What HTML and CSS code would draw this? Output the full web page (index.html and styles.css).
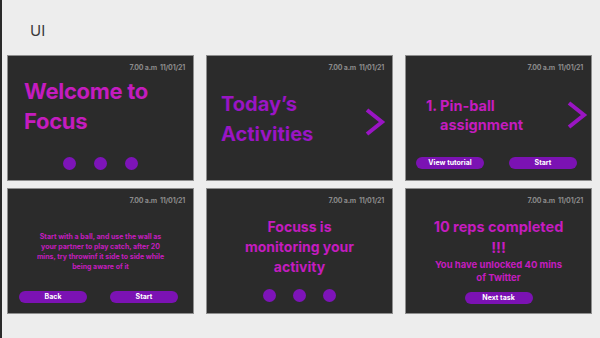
FILE: index.html
```html
<!DOCTYPE html>
<html lang="en">
<head>
    <meta charset="UTF-8">
    <meta name="viewport" content="width=device-width, initial-scale=1.0">
    <title>UI - Focus screens</title>
    <link rel="stylesheet" href="styles.css">
</head>
<body>
    <div class="page">
        <!-- Frame label -->
        <div class="frame-label">UI</div>

        <div class="screens">
            <!-- Welcome -->
            <div class="screen">
                <div class="clock">7.00 a.m&nbsp; 11/01/21</div>
                <div class="welcome-title">Welcome to<br>Focus</div>
                <div class="dots">
                    <span class="dot"></span><span class="dot"></span><span class="dot"></span>
                </div>
            </div>

            <!-- Today's activities -->
            <div class="screen">
                <div class="clock">7.00 a.m&nbsp; 11/01/21</div>
                <div class="row-with-arrow">
                    <div class="activities-title">Today’s<br>Activities</div>
                    <svg class="chevron" width="22" height="30" viewBox="0 0 22 30">
                        <polyline points="3,3 18,15 3,27" fill="none" stroke="#9a15c4" stroke-width="4"/>
                    </svg>
                </div>
            </div>

            <!-- Pin-ball task -->
            <div class="screen">
                <div class="clock">7.00 a.m&nbsp; 11/01/21</div>
                <div class="row-with-arrow task-row">
                    <div class="task-title">1. Pin-ball<br>assignment</div>
                    <svg class="chevron" width="22" height="30" viewBox="0 0 22 30">
                        <polyline points="3,3 18,15 3,27" fill="none" stroke="#9a15c4" stroke-width="4"/>
                    </svg>
                </div>
                <div class="button-row">
                    <button class="pill">View tutorial</button>
                    <button class="pill">Start</button>
                </div>
            </div>

            <!-- Instructions -->
            <div class="screen">
                <div class="clock">7.00 a.m&nbsp; 11/01/21</div>
                <p class="instructions">Start with a ball, and use the wall as<br>your partner to play catch, after 20<br>mins, try throwinf it side to side while<br>being aware of it</p>
                <div class="button-row bottom">
                    <button class="pill">Back</button>
                    <button class="pill">Start</button>
                </div>
            </div>

            <!-- Monitoring -->
            <div class="screen">
                <div class="clock">7.00 a.m&nbsp; 11/01/21</div>
                <div class="monitor-title">Focuss is<br>monitoring your<br>activity</div>
                <div class="dots small-gap">
                    <span class="dot"></span><span class="dot"></span><span class="dot"></span>
                </div>
            </div>

            <!-- Completed -->
            <div class="screen">
                <div class="clock">7.00 a.m&nbsp; 11/01/21</div>
                <div class="done-title">10 reps completed<br>!!!</div>
                <div class="done-text">You have unlocked 40 mins<br>of Twitter</div>
                <button class="pill center">Next task</button>
            </div>
        </div>
    </div>
</body>
</html>
```

FILE: styles.css
```css
body {
    margin: 0;
    font-family: Inter, "Noto Sans", sans-serif;
    background-color: #ededed;
}

.page {
    height: 338px;
    border-left: 2px solid #2a2a2a;
    box-sizing: border-box;
    padding-left: 5px;
}

/* Frame label */
.frame-label {
    height: 55px;
    padding: 22px 0 0 23px;
    box-sizing: border-box;
    font-size: 15px;
    line-height: 18px;
    color: #3a3a3a;
}

/* Grid of phone screens */
.screens {
    display: grid;
    grid-template-columns: repeat(3, 187px);
    grid-template-rows: repeat(2, 126px);
    column-gap: 12px;
    row-gap: 7px;
}

.screen {
    background-color: #2b2b2b;
    border: 1px solid #8e8e8e;
    box-sizing: border-box;
    display: flex;
    flex-direction: column;
    font-weight: 700;
    overflow: hidden;
}

.clock {
    align-self: flex-end;
    margin: 7px 8px 0 0;
    font-size: 7px;
    line-height: 9px;
    color: #8a8a8a;
    letter-spacing: -0.2px;
}

/* Titles */
.welcome-title {
    margin: 4px 0 0 16px;
    font-size: 22px;
    line-height: 30px;
    color: #c41cbf;
    letter-spacing: -0.3px;
}

.row-with-arrow {
    display: flex;
    align-items: center;
    justify-content: space-between;
    margin: 17px 6px 0 14px;
}

.row-with-arrow .chevron {
    margin-top: 6px;
}

.activities-title {
    font-size: 20px;
    line-height: 30px;
    color: #9a15c4;
}

.task-row {
    margin: 24px 3px 0 20px;
}

.task-row .chevron {
    margin-top: -1px;
}

.task-title {
    font-size: 14.5px;
    line-height: 19px;
    color: #c41cbf;
    padding-left: 14px;
    text-indent: -14px;
}

.monitor-title {
    margin-top: 12px;
    text-align: center;
    font-size: 14px;
    line-height: 20px;
    color: #c41cbf;
}

.done-title {
    margin-top: 11px;
    text-align: center;
    font-size: 14.5px;
    line-height: 21px;
    color: #c41cbf;
}

.done-text {
    text-align: center;
    font-size: 9.5px;
    line-height: 13px;
    color: #c41cbf;
}

.instructions {
    margin: 27px 0 0;
    text-align: center;
    font-size: 7px;
    line-height: 10px;
    color: #c41cbf;
}

/* Dots */
.dots {
    display: flex;
    justify-content: center;
    gap: 18px;
    margin-top: 21px;
}

.dots.small-gap {
    gap: 17px;
    margin-top: 12px;
}

.dot {
    width: 13px;
    height: 13px;
    border-radius: 50%;
    background-color: #7d14b8;
}

/* Buttons */
.button-row {
    display: flex;
    justify-content: space-between;
    margin: 23px 14px 0 10px;
}

.button-row.bottom {
    margin: auto 15px 10px 11px;
}

.pill {
    width: 68px;
    height: 12px;
    padding: 0;
    border: none;
    border-radius: 6px;
    background-color: #7b12b3;
    color: #ffffff;
    font-family: inherit;
    font-weight: 700;
    font-size: 7px;
    line-height: 12px;
}

.pill.center {
    align-self: center;
    margin-top: 8px;
}
```
